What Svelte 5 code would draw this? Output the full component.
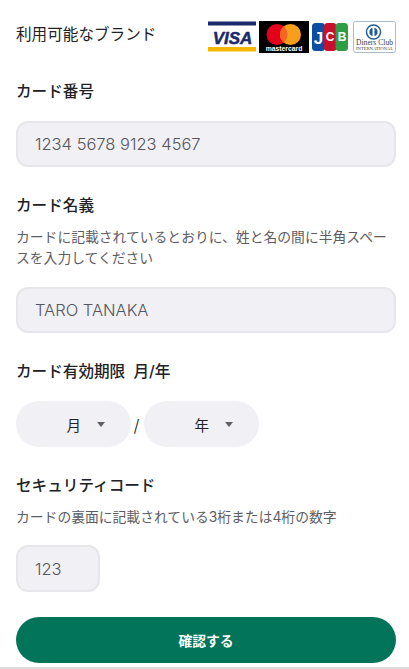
<script>
  const fields = {
    number: '1234 5678 9123 4567',
    name: 'TARO TANAKA',
    cvc: '123'
  };
</script>

<div class="page">
  <div class="brands">
    <span class="brands-label">利用可能なブランド</span>
    <div class="logos">
      <svg class="logo" width="48" height="31" viewBox="0 0 48 31">
        <rect width="48" height="31" fill="#fff" />
        <rect y="0.5" width="48" height="4" fill="#1a2a6c" />
        <rect y="26" width="48" height="4.5" fill="#f7b600" />
        <text x="24.5" y="22.5" text-anchor="middle" class="visa">VISA</text>
      </svg>
      <svg class="logo" width="50" height="32" viewBox="0 0 50 32">
        <rect width="50" height="32" fill="#000" />
        <circle cx="18" cy="13.5" r="10.5" fill="#e3001b" />
        <circle cx="31.5" cy="13.5" r="10.5" fill="#f79e1b" />
        <path d="M24.75 5.4a10.5 10.5 0 0 1 0 16.2a10.5 10.5 0 0 1 0-16.2z" fill="#f26522" />
        <text x="25" y="29.5" text-anchor="middle" class="mc">mastercard</text>
      </svg>
      <svg class="logo" width="36" height="28" viewBox="0 0 36 28">
        <rect x="0" y="0" width="13" height="28" rx="3.5" fill="#0b4ea2" />
        <rect x="12" y="0" width="12.5" height="28" rx="3.5" fill="#c8102e" />
        <rect x="23.5" y="0" width="12.5" height="28" rx="3.5" fill="#2e9e45" />
        <text x="6.5" y="21" text-anchor="middle" class="jcb j">J</text>
        <text x="18" y="18" text-anchor="middle" class="jcb">C</text>
        <text x="30" y="18" text-anchor="middle" class="jcb">B</text>
      </svg>
      <svg class="logo" width="43" height="32" viewBox="0 0 43 32">
        <rect x="0.5" y="0.5" width="42" height="31" rx="2" fill="#fff" stroke="#a9bccb" />
        <circle cx="20.5" cy="11" r="7" fill="#fff" stroke="#1c5a96" stroke-width="1.4" />
        <path d="M19.5 6.8v8.4a4.4 4.4 0 0 1 0-8.4zM21.5 6.8v8.4a4.4 4.4 0 0 0 0-8.4z" fill="#1c5a96" />
        <text x="21.5" y="24" text-anchor="middle" textLength="37" lengthAdjust="spacingAndGlyphs" class="diners">Diners Club</text>
        <text x="21.5" y="29" text-anchor="middle" textLength="37" lengthAdjust="spacingAndGlyphs" class="intl">INTERNATIONAL</text>
      </svg>
    </div>
  </div>

  <section class="field number">
    <div class="label">カード番号</div>
    <input class="input" placeholder={fields.number} />
  </section>

  <section class="field name">
    <div class="label">カード名義</div>
    <p class="help">カードに記載されているとおりに、姓と名の間に半角スペースを入力してください</p>
    <input class="input" placeholder={fields.name} />
  </section>

  <section class="field expiry">
    <div class="label">カード有効期限&nbsp;&nbsp;月/年</div>
    <div class="selects">
      <div class="select"><span>月</span><i class="caret"></i></div>
      <span class="slash">/</span>
      <div class="select"><span>年</span><i class="caret"></i></div>
    </div>
  </section>

  <section class="field cvc">
    <div class="label">セキュリティコード</div>
    <p class="help">カードの裏面に記載されている3桁または4桁の数字</p>
    <input class="input short" placeholder={fields.cvc} />
  </section>

  <button class="submit">確認する</button>
</div>

<style>
  :global(body) {
    margin: 0;
    background: #fff;
  }

  .page {
    box-sizing: border-box;
    height: 669px;
    overflow: hidden;
    padding: 20px 13px 0 16px;
    font-family: Inter, "Noto Sans CJK JP", sans-serif;
    color: #222226;
    border-bottom: 2px solid #dcdcdc;
  }

  .brands {
    display: flex;
    align-items: center;
    justify-content: space-between;
    height: 33px;
    margin-bottom: 28px;
  }

  .brands-label {
    font-size: 15.6px;
    line-height: 26px;
    margin-bottom: 4px;
  }

  .logos {
    display: flex;
    align-items: center;
    gap: 3px;
  }

  .logo {
    display: block;
  }

  .logo:last-child {
    margin-left: 2px;
  }

  .visa {
    font: italic 700 17px "Liberation Sans", sans-serif;
    fill: #1a2a6c;
    stroke: #1a2a6c;
    stroke-width: 0.5px;
  }

  .mc {
    font: 700 6.8px "Liberation Sans", sans-serif;
    fill: #fff;
  }

  .jcb {
    font: 700 12px "Liberation Sans", sans-serif;
    fill: #fff;
  }

  .jcb.j {
    font-size: 17px;
  }

  .diners {
    font: 8px "Liberation Serif", serif;
    fill: #444;
  }

  .intl {
    font: 4px "Liberation Serif", serif;
    fill: #444;
  }

  .label {
    font-size: 15.6px;
    font-weight: 500;
    line-height: 20px;
    padding-top: 1px;
    margin-bottom: -1px;
  }

  .help {
    margin: 12px 0 0;
    font-size: 13.8px;
    line-height: 21px;
    color: #5c5c62;
  }

  .input {
    display: block;
    box-sizing: border-box;
    width: 100%;
    height: 46px;
    padding: 0 17px;
    border: 2px solid #e6e6ec;
    border-radius: 12px;
    background: #f1f0f5;
    font-family: inherit;
    font-size: 16.5px;
    font-weight: 300;
    outline: none;
  }

  .input::placeholder {
    color: #55555b;
    opacity: 1;
  }

  .number .input {
    margin-top: 20px;
  }

  .name {
    margin-top: 28px;
  }

  .name .input {
    margin-top: 18px;
  }

  .expiry {
    margin-top: 28px;
  }

  .selects {
    display: flex;
    align-items: center;
    margin-top: 20px;
  }

  .select {
    box-sizing: border-box;
    display: flex;
    align-items: center;
    justify-content: flex-end;
    gap: 16px;
    width: 115px;
    height: 46px;
    padding-right: 26px;
    border-radius: 23px;
    background: #f1f0f5;
    font-size: 14.5px;
  }

  .caret {
    width: 0;
    height: 0;
    border-left: 4.5px solid transparent;
    border-right: 4.5px solid transparent;
    border-top: 5px solid #5f5f66;
  }

  .slash {
    width: 13px;
    margin-left: -1px;
    margin-right: 1px;
    text-align: center;
    font-size: 17px;
    font-weight: 300;
    margin-top: 3px;
  }

  .cvc {
    margin-top: 28px;
  }

  .cvc .input {
    margin-top: 17px;
    height: 47px;
  }

  .input.short {
    width: 84px;
  }

  .submit {
    display: block;
    width: 100%;
    height: 46px;
    margin-top: 25px;
    border: none;
    border-radius: 23px;
    background: #02745a;
    color: #fff;
    font-family: inherit;
    font-size: 13.8px;
    font-weight: 700;
  }
</style>
